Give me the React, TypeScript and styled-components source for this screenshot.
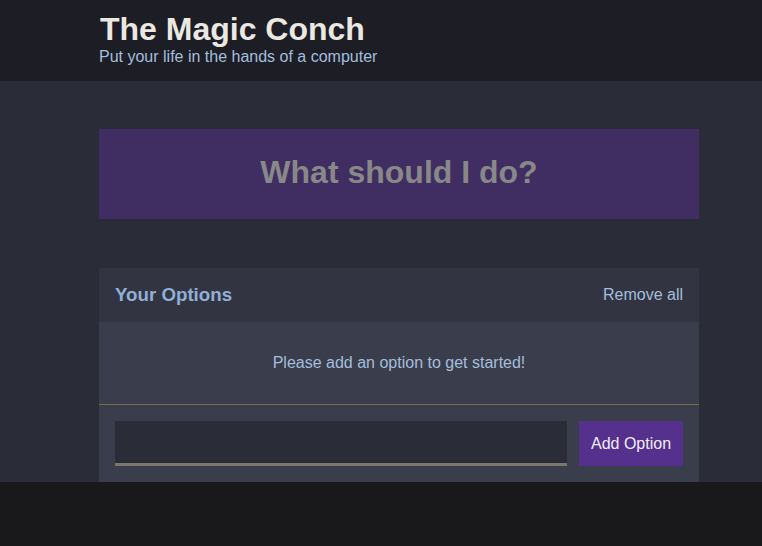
import React from "react";
import styled, { createGlobalStyle } from "styled-components";

const Global = createGlobalStyle`
  html, body { margin: 0; padding: 0; background: #19191b; }
  body { font-family: "Liberation Sans", Arial, sans-serif; }
  * { box-sizing: border-box; }
`;

const Header = styled.header`
  background: #1c1d25;
  height: 81px;
  padding-top: 11px;
`;

const Container = styled.div`
  width: 600px;
  margin-left: 99px;
`;

const Title = styled.h1`
  margin: 0;
  font-size: 32px;
  line-height: 36px;
  font-weight: bold;
  color: #ebe8e2;
  padding-left: 1px;
`;

const Subtitle = styled.h2`
  margin: 0;
  font-size: 16px;
  line-height: 20px;
  font-weight: normal;
  color: #a4bddd;
`;

const Main = styled.main`
  background: #2a2c37;
  padding: 48px 0 0;
`;

const Action = styled.div`
  background: #402e62;
  height: 90px;
  display: flex;
  align-items: center;
  justify-content: center;
  padding-bottom: 4px;
  font-size: 32px;
  font-weight: bold;
  color: #888888;
  margin-bottom: 49px;
`;

const Widget = styled.div`
  background: #3a3d4b;
`;

const WidgetHeader = styled.div`
  background: #323541;
  height: 54px;
  display: flex;
  align-items: center;
  justify-content: space-between;
  padding: 0 16px;
`;

const WidgetTitle = styled.h3`
  margin: 0;
  font-size: 18.72px;
  font-weight: bold;
  color: #90b0d8;
`;

const LinkButton = styled.button`
  background: none;
  border: none;
  padding: 0;
  font-family: inherit;
  font-size: 16px;
  color: #a4bddd;
  cursor: pointer;
`;

const Message = styled.p`
  margin: 0;
  height: 83px;
  display: flex;
  align-items: center;
  justify-content: center;
  font-size: 16px;
  color: #a4bddd;
  border-bottom: 1px solid #76694f;
`;

const Form = styled.form`
  display: flex;
  gap: 12px;
  padding: 16px;
`;

const Input = styled.input`
  flex: 1;
  height: 45px;
  background: #2a2c37;
  border: none;
  border-bottom: 3px solid #7d766d;
  outline: none;
  color: #ebe8e2;
  font-family: inherit;
  font-size: 16px;
  padding: 0 10px;
`;

const AddButton = styled.button`
  width: 104px;
  height: 45px;
  background: #55308d;
  border: none;
  color: #f1eefa;
  font-family: inherit;
  font-size: 16px;
  padding: 0;
`;

export default function App() {
  return (
    <>
      <Global />
      <Header>
        <Container>
          <Title>The Magic Conch</Title>
          <Subtitle>Put your life in the hands of a computer</Subtitle>
        </Container>
      </Header>
      <Main>
        <Container>
          <Action>What should I do?</Action>
          <Widget>
            <WidgetHeader>
              <WidgetTitle>Your Options</WidgetTitle>
              <LinkButton>Remove all</LinkButton>
            </WidgetHeader>
            <Message>Please add an option to get started!</Message>
            <Form onSubmit={(e) => e.preventDefault()}>
              <Input type="text" name="option" />
              <AddButton>Add Option</AddButton>
            </Form>
          </Widget>
        </Container>
      </Main>
    </>
  );
}
